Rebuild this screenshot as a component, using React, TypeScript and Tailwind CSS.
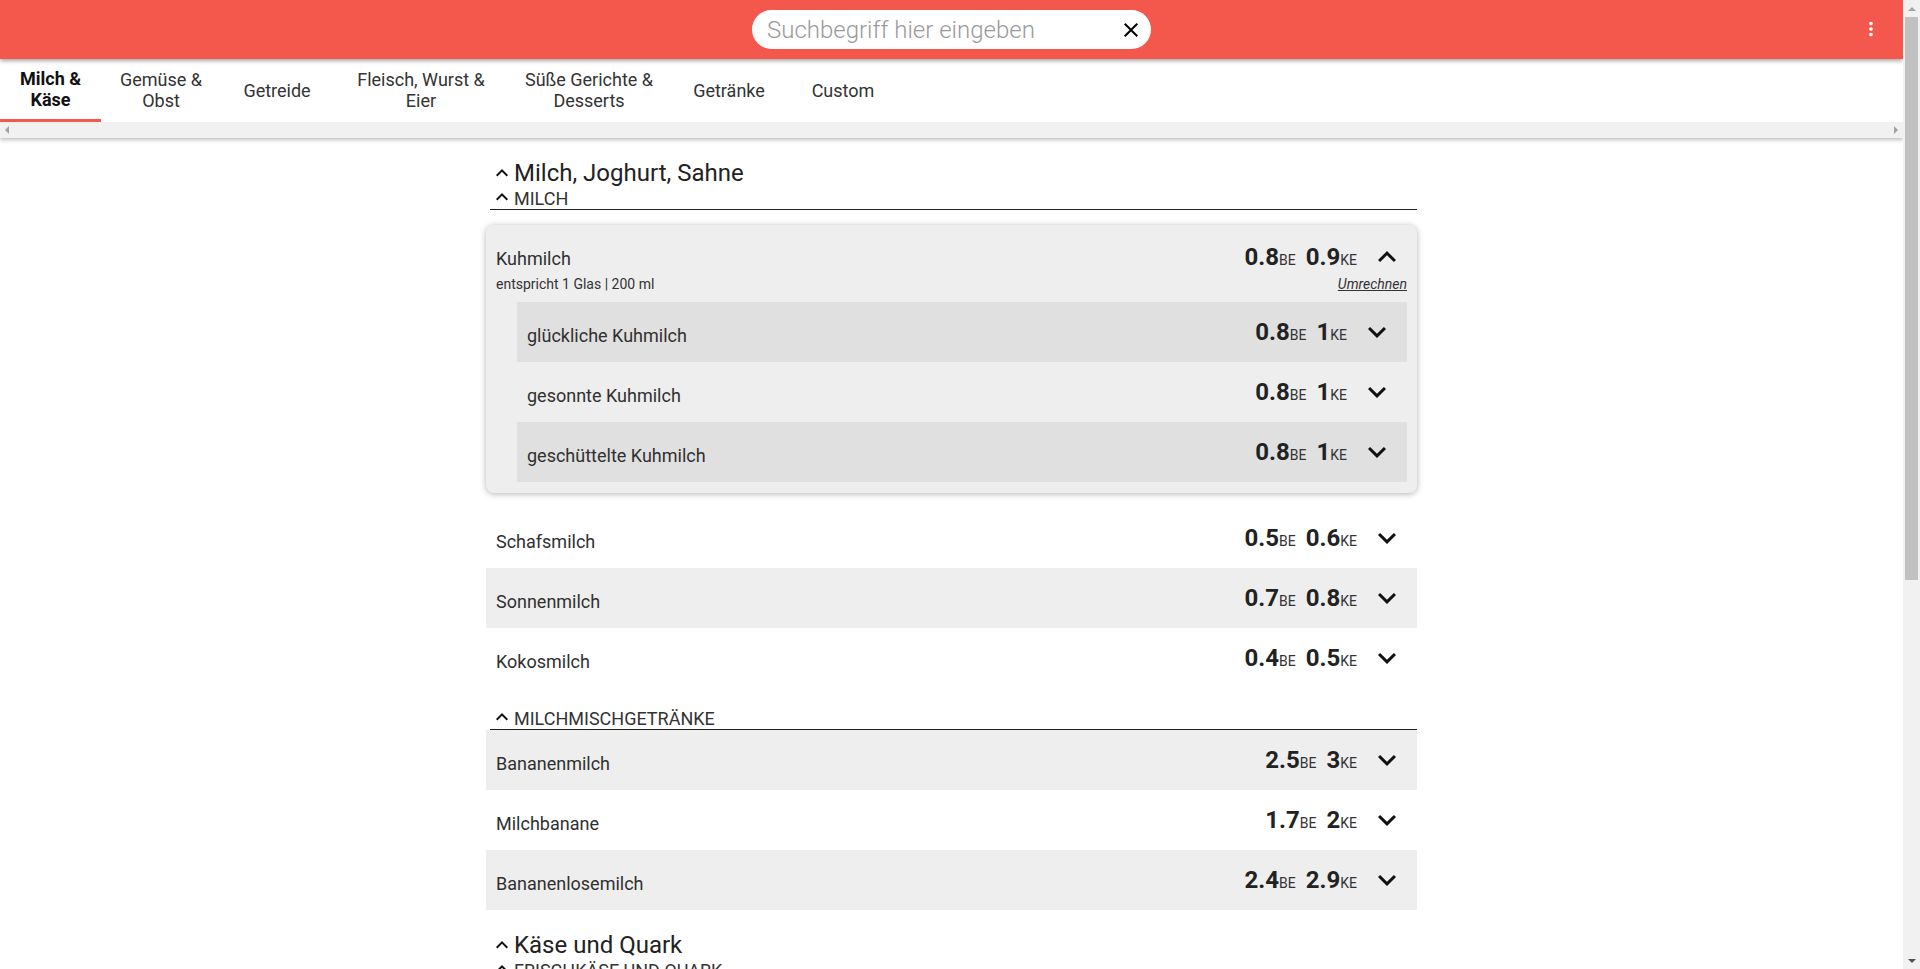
import React from "react";

type Food = { name: string; be: string; ke: string };

const tabs = [
  { lines: ["Milch &", "Käse"], width: "w-[101px]", active: true },
  { lines: ["Gemüse &", "Obst"], width: "w-[120px]", active: false },
  { lines: ["Getreide"], width: "w-[112px]", active: false },
  { lines: ["Fleisch, Wurst &", "Eier"], width: "w-[176px]", active: false },
  { lines: ["Süße Gerichte &", "Desserts"], width: "w-[160px]", active: false },
  { lines: ["Getränke"], width: "w-[120px]", active: false },
  { lines: ["Custom"], width: "w-[108px]", active: false },
];

const kuhmilchVariants: Food[] = [
  { name: "glückliche Kuhmilch", be: "0.8", ke: "1" },
  { name: "gesonnte Kuhmilch", be: "0.8", ke: "1" },
  { name: "geschüttelte Kuhmilch", be: "0.8", ke: "1" },
];

const milch: Food[] = [
  { name: "Schafsmilch", be: "0.5", ke: "0.6" },
  { name: "Sonnenmilch", be: "0.7", ke: "0.8" },
  { name: "Kokosmilch", be: "0.4", ke: "0.5" },
];

const mischgetraenke: Food[] = [
  { name: "Bananenmilch", be: "2.5", ke: "3" },
  { name: "Milchbanane", be: "1.7", ke: "2" },
  { name: "Bananenlosemilch", be: "2.4", ke: "2.9" },
];

function Expand({ up, className }: { up?: boolean; className?: string }) {
  return (
    <svg viewBox="0 0 24 24" fill="currentColor" className={className}>
      <path
        d={
          up
            ? "M12 8l-6 6 1.41 1.41L12 10.83l4.59 4.58L18 14z"
            : "M16.59 8.59 12 13.17 7.41 8.59 6 10l6 6 6-6z"
        }
      />
    </svg>
  );
}

function Values({ be, ke }: { be: string; ke: string }) {
  return (
    <div className="flex items-baseline gap-[10px] text-[#222]">
      <span>
        <span className="text-[24px] font-bold">{be}</span>
        <span className="text-[14px] text-[#333]">BE</span>
      </span>
      <span>
        <span className="text-[24px] font-bold">{ke}</span>
        <span className="text-[14px] text-[#333]">KE</span>
      </span>
    </div>
  );
}

function FoodRow({ food, shaded, dark }: { food: Food; shaded: boolean; dark?: boolean }) {
  const bg = shaded ? (dark ? "bg-[#e0e0e0]" : "bg-[#eeeeee]") : "";
  return (
    <div className={`flex h-[60px] items-center justify-between pl-[10px] pr-[12px] ${bg}`}>
      <span className="translate-y-[3px] text-[18px] text-[#303030]">{food.name}</span>
      <div className="flex items-center">
        <Values be={food.be} ke={food.ke} />
        <Expand className="ml-[12px] size-[36px] text-[#111]" />
      </div>
    </div>
  );
}

function SubHeader({ label, first }: { label: string; first?: boolean }) {
  return (
    <div
      className={`ml-[4px] flex h-[23px] items-end border-b border-[#222] text-[18px] uppercase leading-[21px] text-[#333] ${
        first ? "" : "mt-[19px]"
      }`}
    >
      <Expand up className="size-[24px] text-[#111]" />
      <span>{label}</span>
    </div>
  );
}

function CategoryTitle({ label }: { label: string }) {
  return (
    <div className="ml-[4px] flex h-[28px] items-center text-[24px] leading-[28px] text-[#222]">
      <Expand up className="size-[24px] text-[#111]" />
      <span>{label}</span>
    </div>
  );
}

function KuhmilchCard() {
  return (
    <div className="mt-[15px] mb-[15px] rounded-[8px] bg-[#eeeeee] px-[10px] pb-[11px] shadow-[0_1px_6px_rgba(0,0,0,0.3)]">
      <div className="pt-[14px] pb-[9px] pr-[2px]">
        <div className="flex h-[36px] items-center justify-between">
          <span className="translate-y-[1px] text-[18px] text-[#303030]">Kuhmilch</span>
          <div className="flex items-center">
            <Values be="0.8" ke="0.9" />
            <Expand up className="ml-[12px] size-[36px] text-[#111]" />
          </div>
        </div>
        <div className="-mr-[2px] flex h-[18px] items-center justify-between text-[14px] leading-[18px] text-[#333]">
          <span>entspricht 1 Glas | 200 ml</span>
          <span className="italic underline">Umrechnen</span>
        </div>
      </div>
      <div className="ml-[21px]">
        {kuhmilchVariants.map((f, i) => (
          <FoodRow key={f.name} food={f} shaded={i % 2 === 0} dark />
        ))}
      </div>
    </div>
  );
}

export default function App() {
  return (
    <div className="flex h-[969px] w-full overflow-hidden bg-white font-[Roboto,sans-serif]">
      <div className="flex h-full min-w-0 flex-1 flex-col overflow-hidden">
        <header className="relative z-20 flex h-[59px] shrink-0 items-center justify-center bg-[#f4574c] shadow-[0_2px_4px_rgba(0,0,0,0.35)]">
          <div className="flex h-[39px] w-[399px] items-center rounded-full bg-white pl-[15px] pr-[8px]">
            <input
              readOnly
              placeholder="Suchbegriff hier eingeben"
              className="min-w-0 flex-1 bg-transparent text-[24px] font-light text-[#333] outline-none placeholder:text-[#9a9a9a]"
            />
            <svg viewBox="0 0 24 24" className="size-[24px] text-black" fill="currentColor">
              <path d="M19 6.41 17.59 5 12 10.59 6.41 5 5 6.41 10.59 12 5 17.59 6.41 19 12 13.41 17.59 19 19 17.59 13.41 12z" />
            </svg>
          </div>
          <svg viewBox="0 0 24 24" className="absolute right-[21px] top-[18px] size-[22px] text-white" fill="currentColor">
            <path d="M12 8c1.1 0 2-.9 2-2s-.9-2-2-2-2 .9-2 2 .9 2 2 2zm0 2c-1.1 0-2 .9-2 2s.9 2 2 2 2-.9 2-2-.9-2-2-2zm0 6c-1.1 0-2 .9-2 2s.9 2 2 2 2-.9 2-2-.9-2-2-2z" />
          </svg>
        </header>

        <nav className="relative z-10 shrink-0 bg-white shadow-[0_2px_4px_rgba(0,0,0,0.25)]">
          <div className="flex h-[63px]">
            {tabs.map((t) => (
              <div
                key={t.lines.join(" ")}
                className={`${t.width} flex shrink-0 flex-col items-center justify-center whitespace-nowrap text-center text-[18px] leading-[21px] ${
                  t.active ? "border-b-[3px] border-[#f4574c] font-bold text-[#111]" : "pb-[1px] text-[#333]"
                }`}
              >
                {t.lines.map((l) => (
                  <span key={l}>{l}</span>
                ))}
              </div>
            ))}
          </div>
          <div className="flex h-[16px] items-center justify-between bg-[#f1f1f1] px-[5px]">
            <span className="h-0 w-0 border-y-[4px] border-r-[4px] border-y-transparent border-r-[#a3a3a3]" />
            <span className="h-0 w-0 border-y-[4px] border-l-[4px] border-y-transparent border-l-[#a3a3a3]" />
          </div>
        </nav>

        <main className="mx-auto w-[931px] pt-[21px]">
          <CategoryTitle label="Milch, Joghurt, Sahne" />
          <SubHeader label="Milch" first />
          <KuhmilchCard />
          {milch.map((f, i) => (
            <FoodRow key={f.name} food={f} shaded={i % 2 === 1} />
          ))}
          <SubHeader label="Milchmischgetränke" />
          {mischgetraenke.map((f, i) => (
            <FoodRow key={f.name} food={f} shaded={i % 2 === 0} />
          ))}
          <div className="pt-[21px]">
            <CategoryTitle label="Käse und Quark" />
            <SubHeader label="Frischkäse und Quark" first />
          </div>
        </main>
      </div>

      <aside className="flex h-full w-[17px] shrink-0 flex-col items-center bg-[#f1f1f1]">
        <div className="flex h-[17px] items-center justify-center">
          <span className="h-0 w-0 border-x-[4px] border-b-[4px] border-x-transparent border-b-[#a3a3a3]" />
        </div>
        <div className="h-[563px] w-[13px] bg-[#c1c1c1]" />
        <div className="flex-1" />
        <div className="flex h-[17px] items-center justify-center">
          <span className="h-0 w-0 border-x-[4px] border-t-[4px] border-x-transparent border-t-[#505050]" />
        </div>
      </aside>
    </div>
  );
}
